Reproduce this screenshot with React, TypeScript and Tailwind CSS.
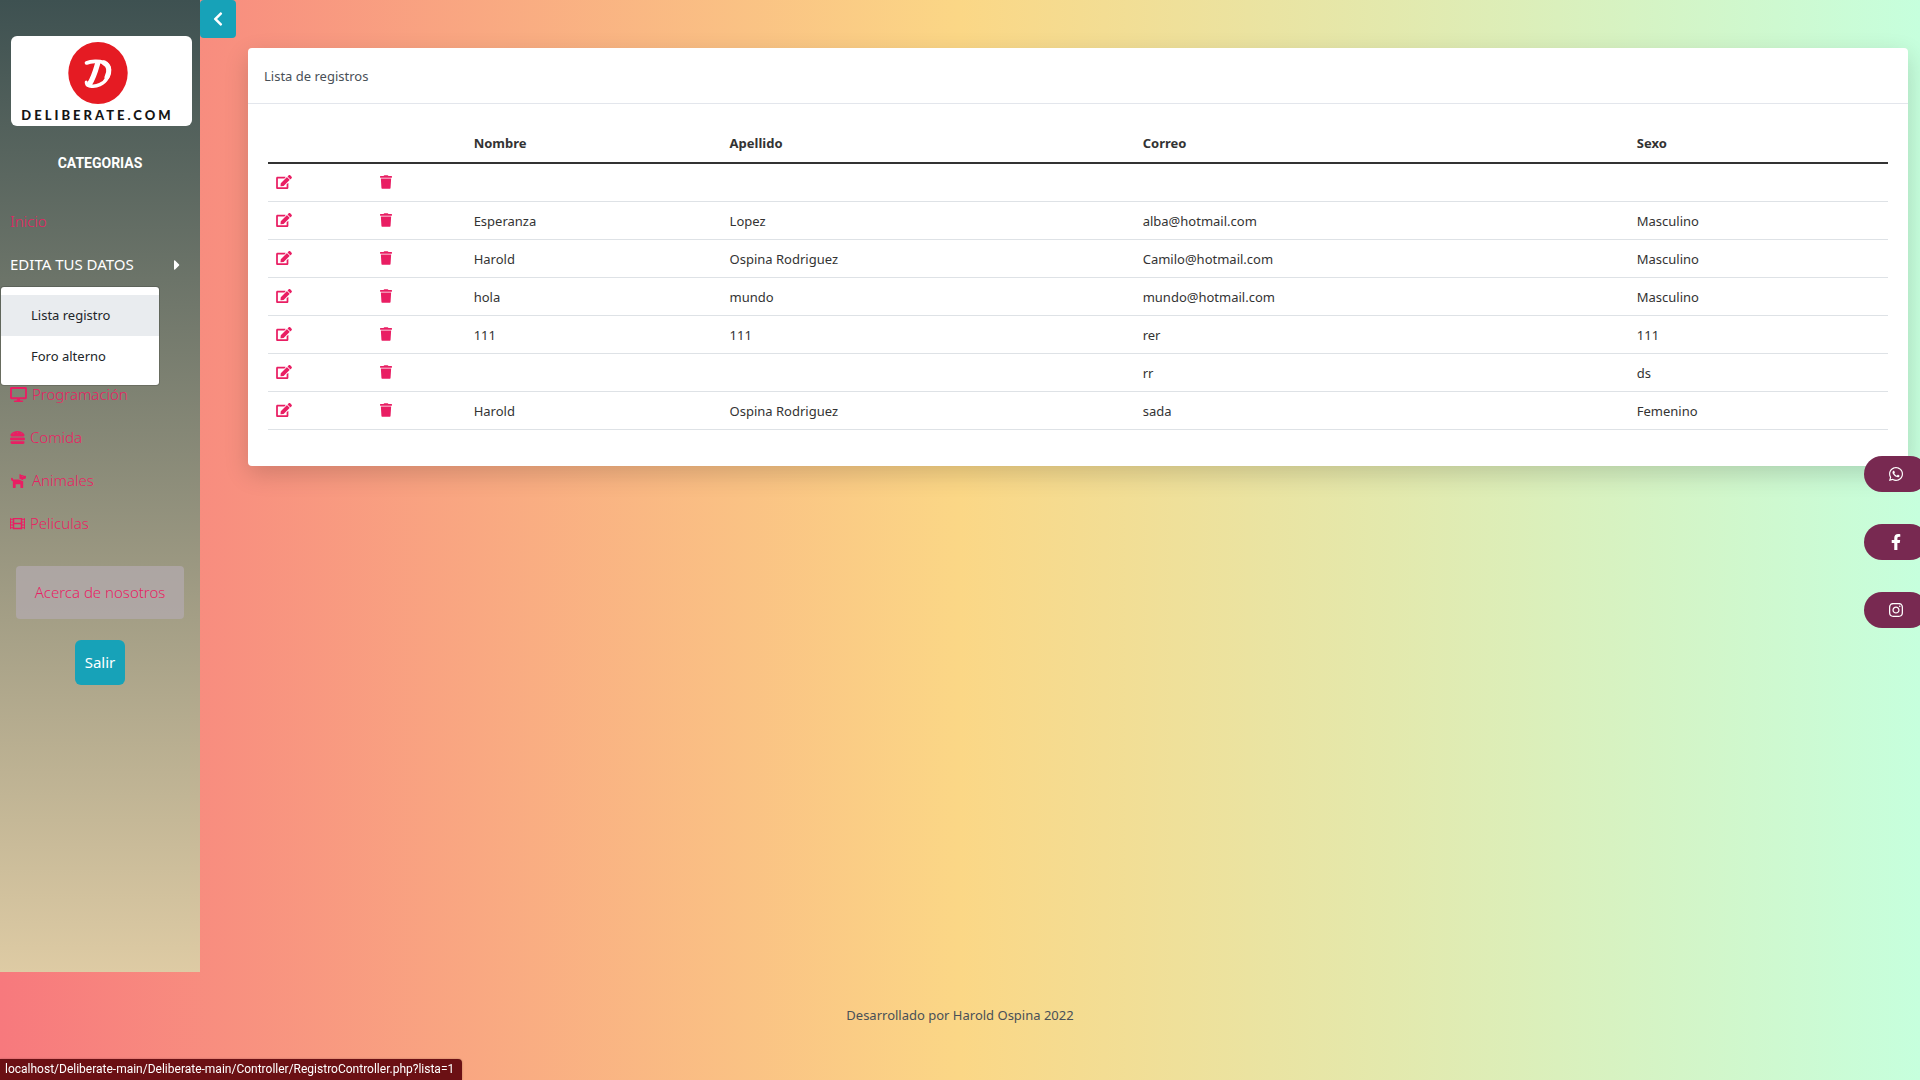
import {
  FaCaretRight,
  FaChevronLeft,
  FaDesktop,
  FaDog,
  FaEdit,
  FaFacebookF,
  FaFilm,
  FaHamburger,
  FaInstagram,
  FaTrash,
  FaWhatsapp,
} from "react-icons/fa";

type Registro = { nombre: string; apellido: string; correo: string; sexo: string };

const registros: Registro[] = [
  { nombre: "", apellido: "", correo: "", sexo: "" },
  { nombre: "Esperanza", apellido: "Lopez", correo: "alba@hotmail.com", sexo: "Masculino" },
  { nombre: "Harold", apellido: "Ospina Rodriguez", correo: "Camilo@hotmail.com", sexo: "Masculino" },
  { nombre: "hola", apellido: "mundo", correo: "mundo@hotmail.com", sexo: "Masculino" },
  { nombre: "111", apellido: "111", correo: "rer", sexo: "111" },
  { nombre: "", apellido: "", correo: "rr", sexo: "ds" },
  { nombre: "Harold", apellido: "Ospina Rodriguez", correo: "sada", sexo: "Femenino" },
];

const categorias = [
  { label: "Programación", Icon: FaDesktop, size: "h-[15px] w-[17px]" },
  { label: "Comida", Icon: FaHamburger, size: "size-[15px]" },
  { label: "Animales", Icon: FaDog, size: "h-[15px] w-[17px]" },
  { label: "Peliculas", Icon: FaFilm, size: "size-[15px]" },
];

const redes = [
  { label: "WhatsApp", Icon: FaWhatsapp },
  { label: "Facebook", Icon: FaFacebookF },
  { label: "Instagram", Icon: FaInstagram },
];

function Logo() {
  return (
    <div className="mr-2 ml-[11px] flex h-[90px] flex-col items-center overflow-hidden rounded-md bg-white pt-1.5">
      <svg viewBox="0 0 60 62" className="mr-2 h-[62px] w-[60px] shrink-0" aria-hidden="true">
        <ellipse cx="30" cy="31" rx="29.7" ry="31" fill="#e51b23" />
        <g fill="none" stroke="#fff" strokeLinecap="round" strokeLinejoin="round">
          <path d="M18.5 21C23 19 31 18.800 35.500 20.400C42 22.800 43 29 39.500 35.500C36 42 28.500 45.500 21.500 43.800" strokeWidth="3.600" />
          <path d="M36 20.800C42 24 41.500 30 39 35" strokeWidth="5" />
          <path d="M29.500 22C27.500 29 25 37 21.500 42" strokeWidth="5.200" />
          <path d="M18.200 40C18.200 42.500 19.500 43.800 21.500 43.800" strokeWidth="3" />
        </g>
      </svg>
      <span className="mt-[3px] mr-2 font-['Lato','Liberation_Sans',sans-serif] text-[13px] leading-4 font-black tracking-[3px] whitespace-nowrap text-[#151515]">
        DELIBERATE.COM
      </span>
    </div>
  );
}

function Sidebar() {
  return (
    <nav
      aria-label="Categorias"
      className="relative flex h-[90vh] w-[200px] shrink-0 flex-col bg-linear-to-b/srgb from-[#3E5151] to-[#DECBA4] pt-9 text-[15px]"
    >
      <Logo />
      <h2 className="mt-[23px] text-center font-['Roboto','Liberation_Sans',sans-serif] text-sm leading-7 font-bold text-white">
        CATEGORIAS
      </h2>
      <a href="#inicio" className="mt-[23px] block px-2.5 leading-[43px] font-light text-[#e91e63]">
        Inicio
      </a>
      <div className="relative">
        <button type="button" aria-expanded="true" className="flex w-full items-center justify-between pr-5 pl-2.5 leading-[43px] text-white">
          EDITA TUS DATOS
          <FaCaretRight className="h-4 w-[6px]" />
        </button>
        <div className="absolute top-full left-0 z-10 w-[160px] rounded border border-black/15 bg-white bg-clip-padding py-2 text-[13px] text-[#212529]">
          <a href="#lista" className="block bg-[#e9ecef] px-[30px] leading-[41px]">
            Lista registro
          </a>
          <a href="#foro" className="block px-[30px] leading-[41px]">
            Foro alterno
          </a>
        </div>
      </div>
      <ul className="mt-[87px]">
        {categorias.map(({ label, Icon, size }) => (
          <li key={label}>
            <a href={"#" + label.toLowerCase()} className="flex items-center gap-[5px] px-2.5 leading-[43px] font-light text-[#e91e63]">
              <Icon className={size} />
              {label}
            </a>
          </li>
        ))}
      </ul>
      <a href="#acerca" className="mx-4 mt-[21px] block rounded bg-[#b2a9ab]/80 py-4 text-center leading-[21px] font-light text-[#e91e63]">
        Acerca de nosotros
      </a>
      <button type="button" className="mx-auto mt-[21px] h-[45px] rounded-md bg-[#17a2b8] px-2.5 text-white">
        Salir
      </button>
    </nav>
  );
}

function TablaRegistros() {
  return (
    <table className="w-full table-fixed border-collapse text-left leading-[21px] text-[#333]">
      <colgroup>
        <col className="w-[6.4%]" />
        <col className="w-[5.8%]" />
        <col className="w-[15.8%]" />
        <col className="w-[25.5%]" />
        <col className="w-[30.5%]" />
        <col className="w-[16%]" />
      </colgroup>
      <thead>
        <tr className="border-b-2 border-[#333]">
          <th className="px-2 pb-2" aria-label="Editar" />
          <th className="px-2 pb-2" aria-label="Eliminar" />
          <th className="px-2 pb-2">Nombre</th>
          <th className="px-2 pb-2">Apellido</th>
          <th className="px-2 pb-2">Correo</th>
          <th className="px-2 pb-2">Sexo</th>
        </tr>
      </thead>
      <tbody>
        {registros.map((r, i) => (
          <tr key={i} className="h-[38px] border-b border-[#dee2e6]">
            <td className="px-2">
              <a href="#editar" aria-label="Editar" className="flex w-4 text-[#e91e63]">
                <FaEdit className="h-3.5 w-4" />
              </a>
            </td>
            <td className="px-2">
              <a href="#eliminar" aria-label="Eliminar" className="flex w-3 text-[#e91e63]">
                <FaTrash className="h-3.5 w-3" />
              </a>
            </td>
            <td className="px-2 pt-[9px] pb-[7px]">{r.nombre}</td>
            <td className="px-2 pt-[9px] pb-[7px]">{r.apellido}</td>
            <td className="px-2 pt-[9px] pb-[7px]">{r.correo}</td>
            <td className="px-2 pt-[9px] pb-[7px]">{r.sexo}</td>
          </tr>
        ))}
      </tbody>
    </table>
  );
}

export default function App() {
  return (
    <div className="flex min-h-screen flex-col overflow-x-hidden bg-linear-to-r/srgb from-[#f7797d] via-[#FBD786] to-[#C6FFDD] font-['Noto_Sans','Open_Sans',sans-serif] text-[13px]">
      <div className="flex">
        <Sidebar />
        <main className="flex min-w-0 flex-1 items-start">
          <button
            type="button"
            aria-label="Ocultar menú"
            className="flex h-[38px] w-9 shrink-0 items-center justify-center rounded bg-[#17a2b8] text-white"
          >
            <FaChevronLeft className="h-4 w-2.5" />
          </button>
          <section className="mt-12 mr-3 ml-3 min-w-0 flex-1 rounded bg-white shadow-[0_8px_24px_rgba(0,0,0,0.16)]">
            <h1 className="border-b border-[#e3e6ec] px-4 pt-[18px] pb-4 leading-[21px] text-[#495057]">Lista de registros</h1>
            <div className="px-5 pt-[29px] pb-9">
              <TablaRegistros />
            </div>
          </section>
        </main>
      </div>
      <footer className="flex flex-1 justify-center pt-[33px] leading-[21px] text-[#495057]">
        <p>Desarrollado por Harold Ospina 2022</p>
      </footer>

      <aside aria-label="Redes sociales" className="fixed top-[456px] -right-2 flex flex-col gap-8">
        {redes.map(({ label, Icon }) => (
          <a
            key={label}
            href={"#" + label.toLowerCase()}
            aria-label={label}
            className="flex h-9 w-16 items-center justify-center rounded-full bg-[#782951] text-white"
          >
            <Icon className="size-4" />
          </a>
        ))}
      </aside>

      <div className="fixed bottom-0 left-0 rounded-tr bg-[#6b1014] pr-2 pl-[5px] font-['Roboto','Liberation_Sans',sans-serif] text-xs leading-[21px] text-white shadow-[0_0_2px_rgba(0,0,0,0.3)]">
        localhost/Deliberate-main/Deliberate-main/Controller/RegistroController.php?lista=1
      </div>
    </div>
  );
}
